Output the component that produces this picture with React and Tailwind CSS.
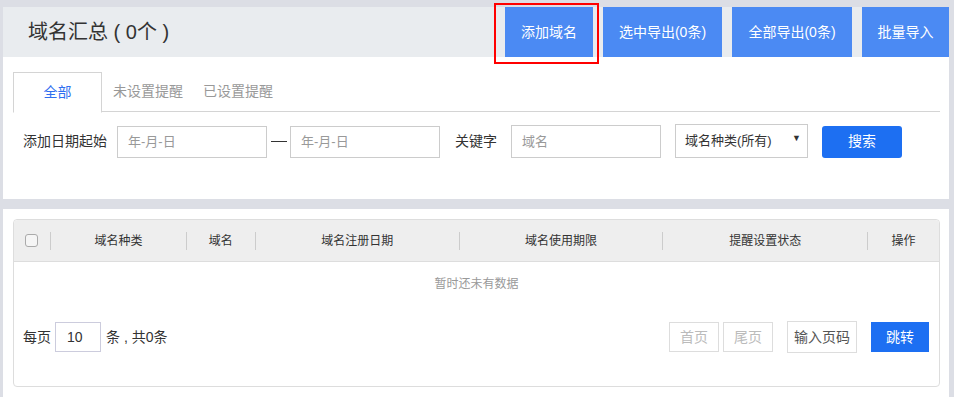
import React from 'react';

const font = { fontFamily: '"Liberation Sans", "Noto Sans CJK SC", sans-serif' };

const cols = [
  { label: '域名种类', w: 'w-[135px]' },
  { label: '域名', w: 'w-[68px]' },
  { label: '域名注册日期', w: 'w-[203px]' },
  { label: '域名使用期限', w: 'w-[203px]' },
  { label: '提醒设置状态', w: 'w-[204px]' },
  { label: '操作', w: 'w-[71px]' },
];

export default function App() {
  return (
    <div style={font} className="w-full h-[397px] bg-[#dcdee5] pt-[7px] pl-[3px] pr-[5px] text-[#333] overflow-hidden">
      {/* title bar */}
      <div className="flex items-center justify-between h-[50px] bg-[#e9ecef]">
        <h1 className="pl-[25px] text-[20px] leading-none text-[#333]">域名汇总 ( 0个 )</h1>
        <div className="flex h-full gap-[10px]">
          <div className="relative h-full">
            <button className="h-full w-[88px] bg-[#4b8af3] text-white text-[14px]">添加域名</button>
            {/* highlight box */}
            <div className="absolute left-[-11px] right-[-6px] top-[-4px] bottom-[-7px] border-2 border-[#f00] pointer-events-none" />
          </div>
          <button className="h-full w-[119px] bg-[#4b8af3] text-white text-[14px]">选中导出(0条)</button>
          <button className="h-full w-[120px] bg-[#4b8af3] text-white text-[14px]">全部导出(0条)</button>
          <button className="h-full w-[87px] bg-[#4b8af3] text-white text-[14px]">批量导入</button>
        </div>
      </div>

      {/* filter panel */}
      <div className="bg-white h-[142px] pt-[15px] pl-[10px] pr-[9px]">
        <div className="flex h-[40px] border-b border-[#d4d4d4] text-[14px]">
          <div className="w-[89px] h-[41px] -mb-px border border-[#d4d4d4] border-b-white bg-white flex items-center justify-center text-[#2f6ff0]">全部</div>
          <div className="pl-[11px] pr-[10px] flex items-center text-[#999]">未设置提醒</div>
          <div className="px-[10px] flex items-center text-[#999]">已设置提醒</div>
        </div>
        <div className="flex items-center mt-[13px] pl-[10px] text-[14px]">
          <span className="mr-[10px]">添加日期起始</span>
          <div className="w-[150px] h-[32px] border border-[#ccc] flex items-center pl-[10px] text-[13px] text-[#999]">年-月-日</div>
          <span className="ml-[4px] mr-[3px] w-[16px] h-px bg-[#333]" />
          <div className="w-[150px] h-[32px] border border-[#ccc] flex items-center pl-[10px] text-[13px] text-[#999]">年-月-日</div>
          <span className="ml-[15px] mr-[14px]">关键字</span>
          <div className="w-[150px] h-[33px] border border-[#ccc] flex items-center pl-[10px] text-[13px] text-[#999]">域名</div>
          <div className="ml-[14px] -mt-[2px] w-[133px] h-[34px] border border-[#ccc] flex items-center justify-between pl-[9px] pr-[6px] text-[13px] text-[#333]">
            <span>域名种类(所有)</span>
            <span className="text-[9px] -mt-[4px]">▼</span>
          </div>
          <button className="ml-[14px] w-[80px] h-[32px] rounded-[3px] bg-[#1d6ff2] text-white text-[14px]">搜索</button>
        </div>
      </div>

      {/* table panel */}
      <div className="bg-white mt-[10px] h-[188px] pt-[10px] pl-[10px] pr-[9px]">
        <div className="h-[168px] border border-[#ddd] rounded-[4px] flex flex-col">
          <div className="flex items-center h-[42px] bg-[#eee] border-b border-[#ddd] text-[12px] rounded-t-[4px]">
            <div className="w-[36px] flex justify-center">
              <span className="w-[13px] h-[13px] border border-[#aaa] rounded-[3px] bg-[#f5f5f5]" />
            </div>
            {cols.map((c) => (
              <React.Fragment key={c.label}>
                <span className="w-px h-[18px] bg-[#ccc]" />
                <div className={`${c.w} text-center`}>{c.label}</div>
              </React.Fragment>
            ))}
          </div>
          <div className="h-[44px] flex items-center justify-center text-[12px] text-[#999]">暂时还未有数据</div>
          <div className="flex items-center justify-between mt-[15px] pl-[9px] pr-[10px] text-[14px]">
            <div className="flex items-center">
              <span>每页</span>
              <div className="ml-[4px] w-[46px] h-[30px] border border-[#ccd] flex items-center pl-[11px]">10</div>
              <span className="ml-[5px]">条 , 共0条</span>
            </div>
            <div className="flex items-center">
              <div className="w-[50px] h-[30px] border border-[#ddd] flex items-center justify-center text-[#bbb]">首页</div>
              <div className="ml-[4px] w-[50px] h-[30px] border border-[#ddd] flex items-center justify-center text-[#bbb]">尾页</div>
              <div className="ml-[14px] w-[70px] h-[32px] border border-[#ddd] flex items-center justify-center text-[#555]">输入页码</div>
              <button className="ml-[14px] w-[58px] h-[30px] bg-[#1d6ff2] text-white">跳转</button>
            </div>
          </div>
        </div>
      </div>
    </div>
  );
}
